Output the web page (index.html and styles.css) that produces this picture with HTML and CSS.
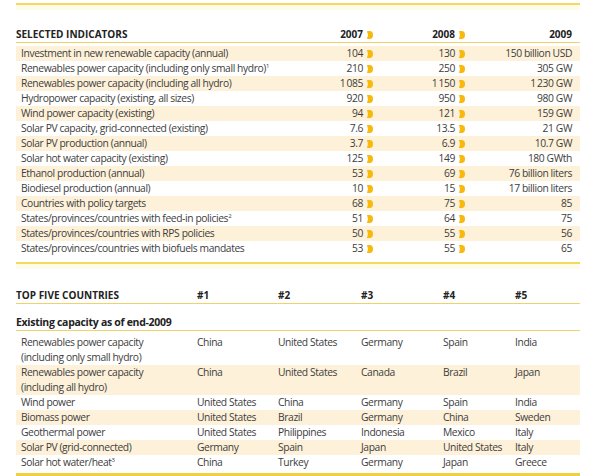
FILE: index.html
```html
<!DOCTYPE html>
<html>
<head>
<meta charset="utf-8">
<link rel="stylesheet" href="styles.css">
</head>
<body>
<div class="page">
  <div class="topband"></div>
  <section class="ind">
    <div class="ind-head">
      <div class="lab">SELECTED INDICATORS</div>
      <div class="val">2007<svg class="arr" viewBox="0 0 6 8"><path d="M0 0H2.6A3.4 4 0 0 1 2.6 8H0L1 4Z"/></svg></div>
      <div class="val">2008<svg class="arr" viewBox="0 0 6 8"><path d="M0 0H2.6A3.4 4 0 0 1 2.6 8H0L1 4Z"/></svg></div>
      <div class="val last">2009</div>
    </div>
    <div class="ind-body">
    <div class="ind-row band"><div class="lab">Investment in new renewable capacity (annual)</div><div class="val">104<svg class="arr" viewBox="0 0 6 8"><path d="M0 0H2.6A3.4 4 0 0 1 2.6 8H0L1 4Z"/></svg></div><div class="val">130<svg class="arr" viewBox="0 0 6 8"><path d="M0 0H2.6A3.4 4 0 0 1 2.6 8H0L1 4Z"/></svg></div><div class="val last">150 billion USD</div></div>
    <div class="ind-row"><div class="lab">Renewables power capacity (including only small hydro)<sup class="fn">1</sup></div><div class="val">210<svg class="arr" viewBox="0 0 6 8"><path d="M0 0H2.6A3.4 4 0 0 1 2.6 8H0L1 4Z"/></svg></div><div class="val">250<svg class="arr" viewBox="0 0 6 8"><path d="M0 0H2.6A3.4 4 0 0 1 2.6 8H0L1 4Z"/></svg></div><div class="val last">305 GW</div></div>
    <div class="ind-row band"><div class="lab">Renewables power capacity (including all hydro)</div><div class="val">1&#8201;085<svg class="arr" viewBox="0 0 6 8"><path d="M0 0H2.6A3.4 4 0 0 1 2.6 8H0L1 4Z"/></svg></div><div class="val">1&#8201;150<svg class="arr" viewBox="0 0 6 8"><path d="M0 0H2.6A3.4 4 0 0 1 2.6 8H0L1 4Z"/></svg></div><div class="val last">1&#8201;230 GW</div></div>
    <div class="ind-row"><div class="lab">Hydropower capacity (existing, all sizes)</div><div class="val">920<svg class="arr" viewBox="0 0 6 8"><path d="M0 0H2.6A3.4 4 0 0 1 2.6 8H0L1 4Z"/></svg></div><div class="val">950<svg class="arr" viewBox="0 0 6 8"><path d="M0 0H2.6A3.4 4 0 0 1 2.6 8H0L1 4Z"/></svg></div><div class="val last">980 GW</div></div>
    <div class="ind-row band"><div class="lab">Wind power capacity (existing)</div><div class="val">94<svg class="arr" viewBox="0 0 6 8"><path d="M0 0H2.6A3.4 4 0 0 1 2.6 8H0L1 4Z"/></svg></div><div class="val">121<svg class="arr" viewBox="0 0 6 8"><path d="M0 0H2.6A3.4 4 0 0 1 2.6 8H0L1 4Z"/></svg></div><div class="val last">159 GW</div></div>
    <div class="ind-row"><div class="lab">Solar PV capacity, grid-connected (existing)</div><div class="val">7.6<svg class="arr" viewBox="0 0 6 8"><path d="M0 0H2.6A3.4 4 0 0 1 2.6 8H0L1 4Z"/></svg></div><div class="val">13.5<svg class="arr" viewBox="0 0 6 8"><path d="M0 0H2.6A3.4 4 0 0 1 2.6 8H0L1 4Z"/></svg></div><div class="val last">21 GW</div></div>
    <div class="ind-row band"><div class="lab">Solar PV production (annual)</div><div class="val">3.7<svg class="arr" viewBox="0 0 6 8"><path d="M0 0H2.6A3.4 4 0 0 1 2.6 8H0L1 4Z"/></svg></div><div class="val">6.9<svg class="arr" viewBox="0 0 6 8"><path d="M0 0H2.6A3.4 4 0 0 1 2.6 8H0L1 4Z"/></svg></div><div class="val last">10.7 GW</div></div>
    <div class="ind-row"><div class="lab">Solar hot water capacity (existing)</div><div class="val">125<svg class="arr" viewBox="0 0 6 8"><path d="M0 0H2.6A3.4 4 0 0 1 2.6 8H0L1 4Z"/></svg></div><div class="val">149<svg class="arr" viewBox="0 0 6 8"><path d="M0 0H2.6A3.4 4 0 0 1 2.6 8H0L1 4Z"/></svg></div><div class="val last">180 GWth</div></div>
    <div class="ind-row band"><div class="lab">Ethanol production (annual)</div><div class="val">53<svg class="arr" viewBox="0 0 6 8"><path d="M0 0H2.6A3.4 4 0 0 1 2.6 8H0L1 4Z"/></svg></div><div class="val">69<svg class="arr" viewBox="0 0 6 8"><path d="M0 0H2.6A3.4 4 0 0 1 2.6 8H0L1 4Z"/></svg></div><div class="val last">76 billion liters</div></div>
    <div class="ind-row"><div class="lab">Biodiesel production (annual)</div><div class="val">10<svg class="arr" viewBox="0 0 6 8"><path d="M0 0H2.6A3.4 4 0 0 1 2.6 8H0L1 4Z"/></svg></div><div class="val">15<svg class="arr" viewBox="0 0 6 8"><path d="M0 0H2.6A3.4 4 0 0 1 2.6 8H0L1 4Z"/></svg></div><div class="val last">17 billion liters</div></div>
    <div class="ind-row band"><div class="lab">Countries with policy targets</div><div class="val">68<svg class="arr" viewBox="0 0 6 8"><path d="M0 0H2.6A3.4 4 0 0 1 2.6 8H0L1 4Z"/></svg></div><div class="val">75<svg class="arr" viewBox="0 0 6 8"><path d="M0 0H2.6A3.4 4 0 0 1 2.6 8H0L1 4Z"/></svg></div><div class="val last">85</div></div>
    <div class="ind-row"><div class="lab">States/provinces/countries with feed-in policies<sup class="fn">2</sup></div><div class="val">51<svg class="arr" viewBox="0 0 6 8"><path d="M0 0H2.6A3.4 4 0 0 1 2.6 8H0L1 4Z"/></svg></div><div class="val">64<svg class="arr" viewBox="0 0 6 8"><path d="M0 0H2.6A3.4 4 0 0 1 2.6 8H0L1 4Z"/></svg></div><div class="val last">75</div></div>
    <div class="ind-row band"><div class="lab">States/provinces/countries with RPS policies</div><div class="val">50<svg class="arr" viewBox="0 0 6 8"><path d="M0 0H2.6A3.4 4 0 0 1 2.6 8H0L1 4Z"/></svg></div><div class="val">55<svg class="arr" viewBox="0 0 6 8"><path d="M0 0H2.6A3.4 4 0 0 1 2.6 8H0L1 4Z"/></svg></div><div class="val last">56</div></div>
    <div class="ind-row"><div class="lab">States/provinces/countries with biofuels mandates</div><div class="val">53<svg class="arr" viewBox="0 0 6 8"><path d="M0 0H2.6A3.4 4 0 0 1 2.6 8H0L1 4Z"/></svg></div><div class="val">55<svg class="arr" viewBox="0 0 6 8"><path d="M0 0H2.6A3.4 4 0 0 1 2.6 8H0L1 4Z"/></svg></div><div class="val last">65</div></div>
    </div>
  </section>

  <div class="topband second"></div>
  <section class="t5">
    <div class="t5-head"><div>TOP FIVE COUNTRIES</div><div>#1</div><div>#2</div><div>#3</div><div>#4</div><div>#5</div></div>
    <div class="t5-sub">Existing capacity as of end-2009</div>
    <div class="t5-rows">
      <div class="t5-row"><div class="lab">Renewables power capacity<br>(including only small hydro)</div><div>China</div><div>United States</div><div>Germany</div><div>Spain</div><div>India</div></div>
      <div class="t5-row band"><div class="lab">Renewables power capacity<br>(including all hydro)</div><div>China</div><div>United States</div><div>Canada</div><div>Brazil</div><div>Japan</div></div>
      <div class="t5-row"><div class="lab">Wind power</div><div>United States</div><div>China</div><div>Germany</div><div>Spain</div><div>India</div></div>
      <div class="t5-row band"><div class="lab">Biomass power</div><div>United States</div><div>Brazil</div><div>Germany</div><div>China</div><div>Sweden</div></div>
      <div class="t5-row"><div class="lab">Geothermal power</div><div>United States</div><div>Philippines</div><div>Indonesia</div><div>Mexico</div><div>Italy</div></div>
      <div class="t5-row band"><div class="lab">Solar PV (grid-connected)</div><div>Germany</div><div>Spain</div><div>Japan</div><div>United States</div><div>Italy</div></div>
      <div class="t5-row"><div class="lab">Solar hot water/heat<sup class="fn">3</sup></div><div>China</div><div>Turkey</div><div>Germany</div><div>Japan</div><div>Greece</div></div>
    </div>
    <div class="endline"></div>
  </section>
</div>
</body>
</html>
```

FILE: styles.css
```css
html, body {
  margin: 0;
  padding: 0;
  background: #ffffff;
}
body {
  font-family: "Open Sans", "Liberation Sans", sans-serif;
  font-size: 10.3px;
  letter-spacing: -0.4px;
  color: #3d3d3d;
}
.page {
  width: 564px;
  padding: 3px 22px 0 16px;
}
.topband {
  height: 2px;
  background: #f3da5c;
  border-bottom: 5px solid #fffbea;
}
.topband.second {
  margin-top: 6px;
}
.ind-head, .ind-row {
  display: grid;
  grid-template-columns: 268px 89px 92px 107px;
  padding-right: 8px;
  height: 15px;
  line-height: 15px;
  white-space: nowrap;
}
.ind-head {
  margin-top: 17px;
  border-bottom: 1px solid #efd26a;
  font-size: 10px;
  font-weight: 700;
  letter-spacing: 0;
  color: #222;
}
.ind-body {
  padding-top: 3px;
}
.ind-row .lab {
  padding-left: 5px;
}
.band {
  background: #fdf1d9;
}
.val {
  text-align: right;
}
.arr {
  width: 6px;
  height: 8px;
  margin-left: 4px;
  vertical-align: -1px;
  fill: #f8b80c;
}
.fn {
  font-size: 6px;
  line-height: 0;
  vertical-align: 4px;
}
.t5-head, .t5-row {
  display: grid;
  grid-template-columns: 181px 81px 83px 82px 72px 65px;
  white-space: nowrap;
}
.t5-head {
  margin-top: 18px;
  height: 16px;
  line-height: 16px;
  font-size: 10px;
  font-weight: 700;
  letter-spacing: 0;
  color: #222;
  border-bottom: 1px solid #efd26a;
}
.t5-sub {
  height: 15px;
  line-height: 15px;
  padding-top: 11px;
  font-size: 10.5px;
  font-weight: 700;
  letter-spacing: -0.3px;
  color: #222;
  border-bottom: 1px solid #efd26a;
}
.t5-rows {
  margin-top: 4px;
}
.t5-row {
  line-height: 15px;
}
.t5-row .lab {
  padding-left: 5px;
}
.endline {
  margin-top: 3px;
  height: 3px;
  background: #f0cf45;
}
```
